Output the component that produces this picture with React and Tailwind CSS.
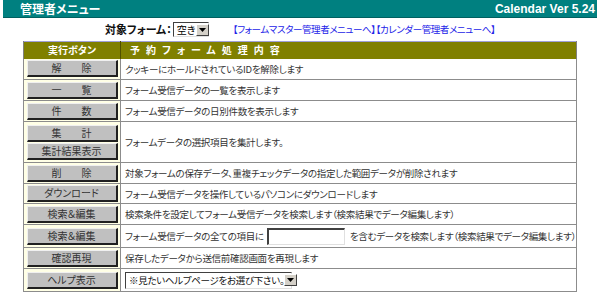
import React from 'react'

const rows = [
  { btn: ['解　　除'], text: 'クッキーにホールドされているIDを解除します', h: 'h-[21px]' },
  { btn: ['一　　覧'], text: 'フォーム受信データの一覧を表示します', h: 'h-[21px]' },
  { btn: ['件　　数'], text: 'フォーム受信データの日別件数を表示します', h: 'h-[21px]' },
  { btn: ['集　　計', '集計結果表示'], text: 'フォームデータの選択項目を集計します。', h: 'h-[41px]' },
  { btn: ['削　　除'], text: '対象フォームの保存データ、重複チェックデータの指定した範囲データが削除されます', h: 'h-[21px]' },
  { btn: ['ダウンロード'], text: 'フォーム受信データを操作しているパソコンにダウンロードします', h: 'h-[20px]' },
  { btn: ['検索＆編集'], text: '検索条件を設定してフォーム受信データを検索します（検索結果でデータ編集します）', h: 'h-[21px]' },
  { btn: ['検索＆編集'], kind: 'input', h: 'h-[23px]' },
  { btn: ['確認再現'], text: '保存したデータから送信前確認画面を再現します', h: 'h-[21px]' },
  { btn: ['ヘルプ表示'], kind: 'select', h: 'h-[23px]' },
]

const Btn = ({ label }) => (
  <div className="w-[91px] h-[17px] mx-auto bg-[#c0c0c0] border-t border-l border-t-[#f0f0f0] border-l-[#f0f0f0] border-b-2 border-r-2 border-b-[#202020] border-r-[#202020] flex items-center justify-center text-[10px] leading-none text-[#333]">
    {label}
  </div>
)

const Arrow = () => (
  <span className="shrink-0 w-[13px] h-[12px] bg-[#d4d0c8] border border-t-white border-l-white border-b-[#404040] border-r-[#404040] flex items-center justify-center">
    <svg width="7" height="4" viewBox="0 0 7 4"><path d="M0 0h7L3.5 4z" fill="#000" /></svg>
  </span>
)

export default function App() {
  return (
    <div className="w-[600px] h-[296px] bg-white font-['Noto_Sans_CJK_JP','Liberation_Sans',sans-serif] [font-feature-settings:'palt'] overflow-hidden">
      <div className="mx-[3px] h-[18px] bg-[#008080] border-b border-[#006060] flex items-center justify-between px-[17px] pr-[2px] text-white font-bold text-[12px] leading-none">
        <span>管理者メニュー</span>
        <span className="font-['Liberation_Sans',sans-serif]">Calendar Ver 5.24</span>
      </div>

      <div className="h-[23px] flex items-center pl-[105px] whitespace-nowrap">
        <span className="font-bold text-[11px] text-[#111]">対象フォーム：</span>
        <span className="ml-[1px] h-[15px] w-[36px] border border-t-[#404040] border-l-[#404040] border-b-[#e0e0e0] border-r-[#e0e0e0] bg-white flex items-center justify-between pl-[3px] pr-[1px] text-[10px] leading-none">
          空き<Arrow />
        </span>
        <span className="ml-[24px] text-[9.5px] tracking-[-0.4px] text-[#2323e8]">【フォームマスター管理者メニューへ】【カレンダー管理者メニューへ】</span>
      </div>

      <table className="ml-[23px] w-[554px] table-fixed border-collapse text-[9.5px] tracking-[-0.3px] leading-[14px] text-[#333]">
        <thead>
          <tr className="h-[17px] bg-[#808000] text-white border-t border-[#a0a0d8]">
            <th className="w-[97px] font-bold text-[10px] tracking-normal border-r border-[#505000] border-l border-l-[#808080]">実行ボタン</th>
            <th className="text-left pl-[9px] font-bold text-[10px] tracking-[6px] border-r border-[#808080]">予約フォーム処理内容</th>
          </tr>
        </thead>
        <tbody>
          {rows.map((r, i) => (
            <tr key={i} className={`${r.h} border-b border-[#8c8c8c]`}>
              <td className="bg-[#ffffe6] border-l border-r border-[#8c8c8c] align-middle tracking-normal">
                <div className="flex flex-col gap-[1px]">
                  {r.btn.map((b) => <Btn key={b} label={b} />)}
                </div>
              </td>
              <td className="pl-[4px] border-r border-[#8c8c8c] whitespace-nowrap overflow-hidden">
                {r.kind === 'input' ? (
                  <div className="flex items-center">
                    フォーム受信データの全ての項目に
                    <span className="ml-[3px] mr-[5px] w-[85px] h-[17px] bg-white border-t-2 border-l-2 border-t-[#404040] border-l-[#404040] border-b border-r border-b-[#e0e0e0] border-r-[#e0e0e0]" />
                    を含むデータを検索します（検索結果でデータ編集します）
                  </div>
                ) : r.kind === 'select' ? (
                  <span className="inline-flex items-center justify-between w-[167px] h-[17px] border border-t-[#404040] border-l-[#404040] border-b-[#e0e0e0] border-r-[#e0e0e0] pl-[3px] pr-[1px] text-[#111]">
                    ※見たいヘルプページをお選び下さい。<Arrow />
                  </span>
                ) : (
                  r.text
                )}
              </td>
            </tr>
          ))}
        </tbody>
      </table>
    </div>
  )
}
